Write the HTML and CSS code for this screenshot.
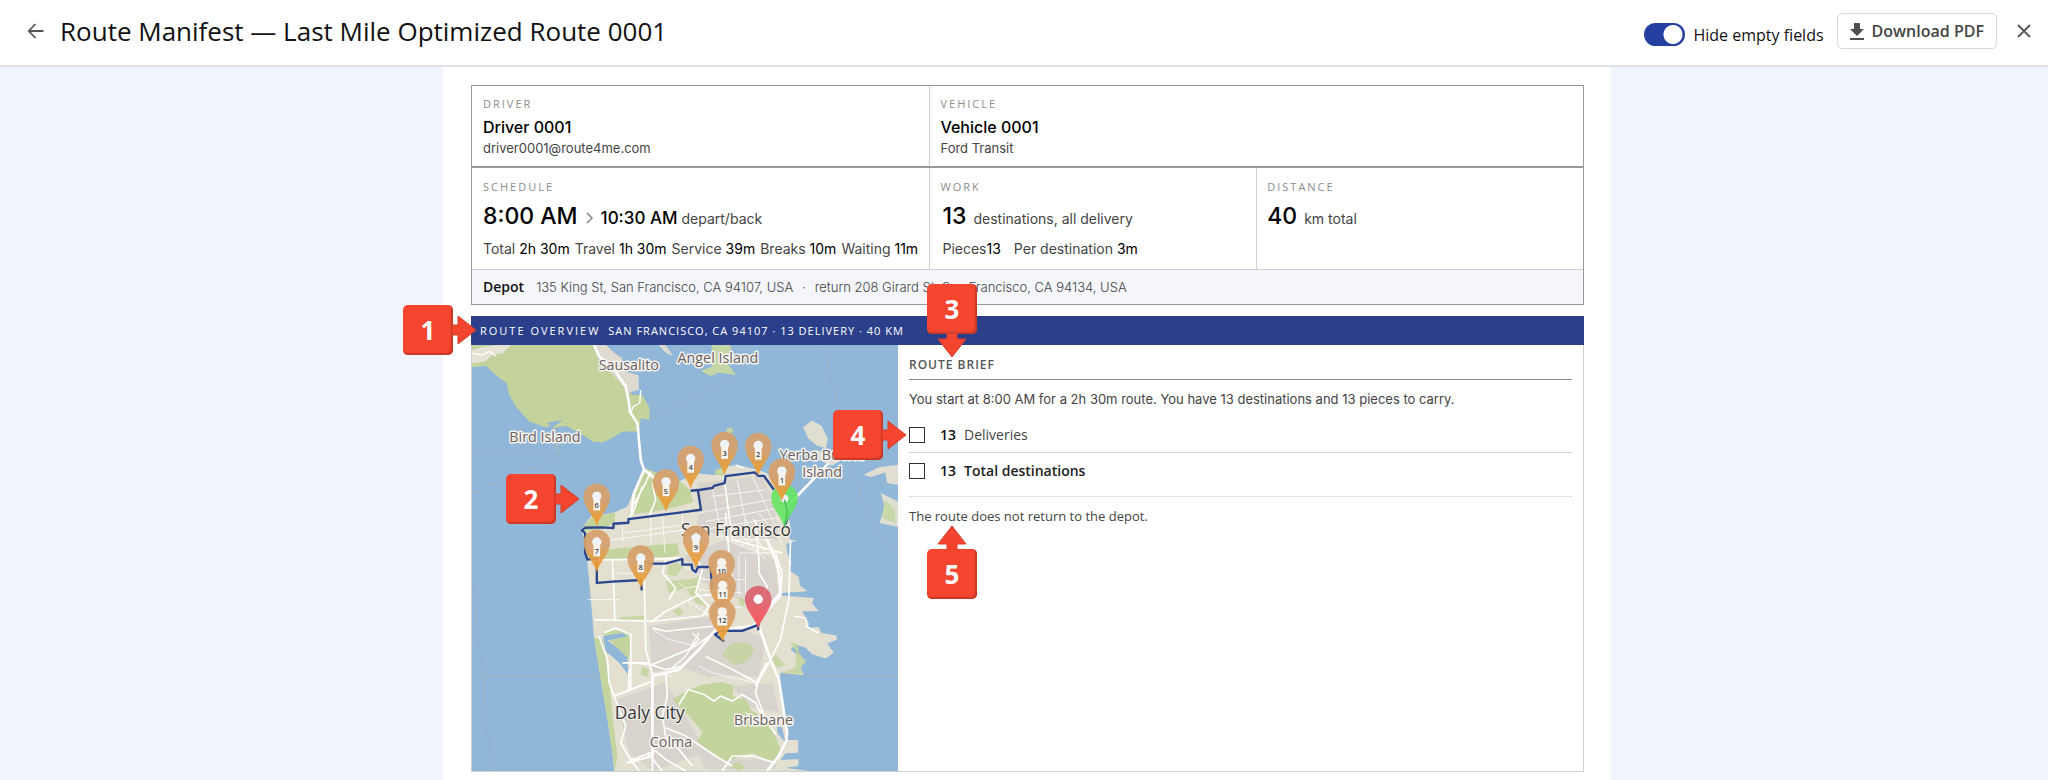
FILE: index.html
```html
<!DOCTYPE html>
<html lang="en">
<head>
<meta charset="utf-8">
<meta name="viewport" content="width=device-width, initial-scale=1">
<title>Route Manifest</title>
<link rel="stylesheet" href="styles.css">
</head>
<body>
<header class="topbar">
  <button class="icon-btn" type="button" aria-label="Back">
    <svg width="24" height="24" viewBox="0 0 24 24" fill="none" stroke="#555" stroke-width="1.8"><path d="M19.500 12H5M11.500 5L4.800 12L11.500 19"/></svg>
  </button>
  <h1 class="title">Route Manifest — Last Mile Optimized Route 0001</h1>
  <label class="toggle"><input class="switch" type="checkbox" role="switch" checked><span>Hide empty fields</span></label>
  <button class="download" type="button">
    <svg width="14" height="17" viewBox="0 0 14 17" fill="#4f4f4f"><path d="M4 0h6v6h4l-7 7-7-7h4zM0 15h14v2H0z"/></svg>
    Download PDF
  </button>
  <button class="icon-btn close" type="button" aria-label="Close">
    <svg width="14" height="14" viewBox="0 0 14 14" fill="none" stroke="#555" stroke-width="1.8"><path d="M1 1l12 12M13 1L1 13"/></svg>
  </button>
</header>
<main class="page">
  <article class="sheet">
    <section class="summary">
      <div class="row people">
        <div class="cell"><h2 class="label">DRIVER</h2><p class="name">Driver 0001</p><p class="sub">driver0001@route4me.com</p></div>
        <div class="cell"><h2 class="label">VEHICLE</h2><p class="name">Vehicle 0001</p><p class="sub">Ford Transit</p></div>
      </div>
      <div class="row stats">
        <div class="cell">
          <h2 class="label">SCHEDULE</h2>
          <p class="figure"><span class="big">8:00 AM</span><svg class="chev" width="8" height="14" viewBox="0 0 8 14" fill="none" stroke="#888" stroke-width="1.500"><path d="M1 2l5 5-5 5"/></svg><span class="mid">10:30 AM</span><span class="unit">depart/back</span></p>
          <p class="facts"><span>Total <b>2h 30m</b></span><span>Travel <b>1h 30m</b></span><span>Service <b>39m</b></span><span>Breaks <b>10m</b></span><span>Waiting <b>11m</b></span></p>
        </div>
        <div class="cell work">
          <h2 class="label">WORK</h2>
          <p class="figure wide"><span class="big">13</span><span class="unit">destinations, all delivery</span></p>
          <p class="facts wide"><span>Pieces<b>13</b></span><span>Per destination <b>3m</b></span></p>
        </div>
        <div class="cell">
          <h2 class="label">DISTANCE</h2>
          <p class="figure wide"><span class="big">40</span><span class="unit">km total</span></p>
        </div>
      </div>
      <div class="depot"><b>Depot</b><span>135 King St, San Francisco, CA 94107, USA</span><span>·</span><span>return 208 Girard St, San Francisco, CA 94134, USA</span></div>
    </section>

    <section class="overview">
      <div class="bar"><h2 class="bar-title">ROUTE OVERVIEW</h2><span class="bar-meta">SAN FRANCISCO, CA 94107 · 13 DELIVERY · 40 KM</span>
        <span class="callout right c1">1<svg class="tip" viewBox="0 0 24 30"><path d="M0 10H6V1L24 15L6 29V20H0z"/></svg></span>
      </div>
      <div class="body">
        <div class="map">
          <svg class="map-art" viewBox="18 15 1280 1280" role="img" aria-label="Route map of San Francisco">
            <defs>
              <linearGradient id="amber" x1="0" y1="0" x2="0" y2="1"><stop offset="0.400" stop-color="#d6a06c"/><stop offset="0.800" stop-color="#eb9d35"/></linearGradient>
              <linearGradient id="rose" x1="0" y1="0" x2="0" y2="1"><stop offset="0.300" stop-color="#db6470"/><stop offset="0.800" stop-color="#f4535b"/></linearGradient>
              <path id="drop" d="M0 0C-7 -30 -40 -57 -40 -89A40 40 0 0 1 40 -89C40 -57 7 -30 0 0Z"/>
              <g id="pin"><use href="#drop" fill="url(#amber)" opacity="0.930"/><circle cy="-91" r="14" fill="#edf3f8"/><path d="M-10 -86H10V-48H-10z" fill="#f7f5ef"/></g>
              <g id="pin2"><use href="#drop" fill="url(#amber)" opacity="0.930"/><circle cy="-91" r="14" fill="#f7f3ee"/><path d="M-15 -80H15V-50H-15z" fill="#f7f5ef"/></g>
            </defs>
            <path fill="#90b7d8" d="M0 0H1320V1320H0z"/>
            <g fill="none" stroke="#9eafbd" stroke-width="2">
              <path d="M545 242L812 108M1070 15L1120 200L1190 490L1250 590L1290 630M18 345H285L270 310M18 460L280 350M18 720L50 1008L75 1295M50 1008H1298"/>
            </g>
            <path fill="#e3e0d1" d="M345 570L375 530L445 518L485 500L505 450L535 385L570 400L640 425L690 400L750 406L770 380L820 376L870 388L905 400L940 450L962 500L975 560L972 600L995 603L962 612L965 640L978 670L970 690L1000 712L1003 738L1027 755L945 760L948 768L1045 775L1040 792L1060 815L1010 815L1030 850L1028 865L1060 862L1068 880L1112 888L1115 900L1085 912L1105 940L1080 957L1040 944L1020 925L990 915L975 930L1020 965L1005 985L1015 1007L945 1000L942 1040L952 1090L962 1160L967 1202L998 1202L998 1240L960 1242L945 1262L1000 1260L998 1280L960 1285L1030 1295H445L440 1240L425 1140L405 1020L385 895L375 780L365 670L357 600Z"/>
            <path fill="#d9d3cd" d="M700 430L890 408L925 490L940 600L800 590L690 570L700 520zM655 650L780 600L930 660L940 780L860 800L700 720zM550 860L740 830L900 900L880 1010L720 1010L640 980L560 1000zM450 1080L600 1030L650 1110L720 1240L560 1295L490 1240zM800 1040L920 1030L940 1120L850 1100zM660 1180L760 1260L860 1260L940 1220L930 1290H720z"/>
            <path fill="#c3d39b" d="M18 82L60 78L90 105L122 130L130 165L150 200L190 245L240 262L262 258L270 310L282 340L262 300L268 264L300 258L350 285L380 305L410 308L430 300L470 275L520 275L525 235L550 240L552 205L530 165L500 165L460 120L430 90L405 70L380 15H18z"/>
            <path fill="#90b7d8" d="M245 248L292 240L255 265z"/>
            <path fill="#dedad0" d="M380 15H420L450 42L470 55L462 80L480 95L518 105L520 150L490 158L455 120L405 65zM578 15L600 15L622 48L600 38z"/>
            <path fill="#e4e3d6" d="M18 30L50 20L105 15H135L110 40L80 45L55 65L18 70z"/>
            <path fill="#c5d6a6" d="M738 15H795L800 48L785 70L812 105L760 98L735 108L705 92L738 80zM780 270L795 262L805 275L790 285z"/>
            <path fill="#e0ddd1" d="M1013 262L1040 242L1068 258L1087 295L1082 325L1055 318L1028 295zM1050 330L1085 340L1120 365L1100 378L1060 360zM1195 405L1240 382L1298 375V435L1265 430L1260 398L1215 412zM1246 460L1298 485V562L1243 550L1258 500z"/>
            <path fill="#c9d8aa" d="M1258 480L1290 510V550L1250 535z"/>
            <g fill="#c4d49f">
              <path d="M540 385L600 410L650 430L672 450L684 487L620 505L555 517L488 525L505 470z"/>
              <path d="M347 567L380 530L448 518L448 545L425 560L360 575zM750 390L775 382L775 408L748 405z"/>
              <path d="M365 640L440 628L635 610L642 645L600 655L365 665z"/>
              <path d="M385 895L412 900L420 960L432 1040L440 1130L455 1250L447 1295L440 1240L425 1140L405 1020z"/>
              <path d="M410 882L430 870L488 878L495 915L490 960L470 955L440 910z"/>
              <path d="M620 1080L665 1052L710 1035L770 1028L805 1038L800 1070L840 1080L860 1115L900 1135L930 1190L945 1230L920 1270L860 1240L775 1268L735 1240L692 1205L712 1180L670 1130z"/>
              <path d="M770 945L800 910L850 910L866 930L845 965L805 978zM970 905L998 915L1000 940L1022 965L1005 985L1012 1005L945 1000L990 985L992 935zM605 680L635 668L652 682L630 710L605 705zM620 815L640 804L655 815L640 830zM600 725L680 718L700 710L690 760L720 800L690 790L660 745L610 760zM530 980L550 990L545 1015L525 1005zM905 950L930 945L960 975L935 985zM460 833L535 828V840L460 842zM790 1280L820 1265L840 1285L820 1295zM820 775L838 778L835 800L820 795z" opacity=".85"/>
            </g>
            <path fill="#90b7d8" d="M412 890L440 885L470 880L485 890L440 900L425 902L460 930L485 955L487 1005L460 970L420 935zM935 1160L950 1165L960 1210L935 1180z"/>
            <g fill="none" stroke="#fff" stroke-linejoin="round">
              <path stroke-width="3" opacity=".75" d="M470 548V608M555 525V610M590 520L598 640M650 512V600M700 520L965 470M720 545L965 500M710 570L960 530M740 440L770 600M815 420L850 600M860 410L930 560M735 470L900 450M800 560L900 660M820 620L930 570M780 600L880 640M840 540L900 640M860 535L930 640M880 520L950 610M800 600L920 600M820 640H940M470 580L660 555M370 610L660 570M370 660H640M365 780H460M455 700L540 705M640 670L720 720M700 720H840M700 750L830 760M800 650V760M820 650V770M840 650V760M640 730L660 745L700 740M560 870L610 900L690 920M660 780L735 830M700 830L830 800M700 980L740 1000L870 1030M560 1000L620 1010"/>
              <path stroke-width="5" d="M365 662L640 655M440 660L448 845M535 690L540 930L560 1005V1295M385 840L560 845L700 830M560 845L600 815L650 790L690 770L740 765M560 865L600 875L740 860M445 1070L560 1025M495 970L560 975L680 925L760 870M490 990L488 1050M470 970L540 970L600 990L650 980M400 890L410 920L425 960L430 1030L445 1070L480 1160L465 1210L495 1262M415 880L450 865L495 885V1050M600 1000L605 1070L590 1130L600 1190L640 1230L680 1280M640 1095L668 1050L715 1065L745 1085L765 1070L800 1085L830 1065L870 1090L880 1110L930 1185M600 660L590 700L630 745L610 780M690 650L710 690L690 760L730 800L710 830M870 540L880 660V700L905 740L890 790M930 640L950 700L945 770L890 830M870 1040L910 970L945 900L970 780L975 600M780 520L790 640M775 410L800 600L950 640M600 1165L660 1190L750 1250L800 1280M770 1295L800 1250L860 1250L930 1270M495 1262L570 1235L600 1260L660 1295M495 1262L520 1295M545 1240L590 1295M500 500L535 440L555 395M550 530L570 480L560 430M500 525L530 440M720 950L790 985L875 1030M880 1020L870 1060L900 1140"/>
              <path stroke-width="8" d="M385 15L400 50L440 80L480 140L490 190L492 215L515 250L525 360L535 390L570 418L630 432M535 390L505 460L495 530M960 505L1090 370M905 600L930 660L940 700L945 760L885 830M880 860L915 960L940 1020L965 1180L962 1205L940 1250L905 1295M560 1010L640 990L700 930L750 870L860 860L890 830M560 1260L560 1010M485 1270L560 1250M905 970L870 1040"/>
              <path stroke-width="4" d="M525 150L522 190L502 200L495 220M20 40L50 45L70 35L90 48M810 375L835 385M985 830L1020 835L1025 860L1055 880M1020 860L1060 880M840 1120L930 1160M680 880L700 900L670 930M700 880L660 950L620 985"/>
            </g>
            <g fill="none" stroke="#2a468c" stroke-width="7" stroke-linejoin="round">
              <path d="M957 560L972 520M925 450L895 408L878 408L868 398L780 409L777 430L745 438L742 444L705 450L675 453M697 453L706 510L630 520L600 524L512 535L488 538V549L443 552V565L410 563L358 564L348 572L358 580V640L365 660L393 657V730L440 726L525 721L528 752M548 672H600L650 658V675L678 675L680 690L690 697L697 682H735L740 750M771 780V860M775 905L748 885L765 874H830L878 856V872"/>
            </g>
            <g class="place">
              <text x="489" y="90">Sausalito</text><text x="757" y="68">Angel Island</text><text x="237" y="307">Bird Island</text><text x="1070" y="360">Yerba Buena</text><text x="1070" y="411">Island</text><text x="894" y="1156">Brisbane</text><text x="616" y="1222">Colma</text>
            </g>
            <g class="place city"><text x="811" y="588">San Francisco</text><text x="552" y="1138">Daly City</text></g>
            <use href="#drop" x="957" y="563" fill="#66e464" opacity=".92"/><circle cx="957" cy="476" r="12" fill="#eee"/>
            <path d="M957 480L965 515L957 560" fill="none" stroke="#43b957" stroke-width="4"/>
            <use href="#pin" x="949" y="485"/><use href="#pin" x="878" y="408"/><use href="#pin" x="777" y="405"/><use href="#pin" x="675" y="447"/><use href="#pin" x="601" y="517"/><use href="#pin" x="393" y="560"/><use href="#pin" x="393" y="698"/><use href="#pin" x="525" y="746"/><use href="#pin" x="691" y="686"/>
            <use href="#pin2" x="768" y="760"/>
            <text class="num" x="768" y="703">10</text>
            <use href="#pin2" x="771" y="828"/><use href="#pin2" x="770" y="908"/>
            <use href="#drop" x="878" y="868" fill="url(#rose)" opacity=".93"/><circle cx="878" cy="779" r="14" fill="#fff"/>
            <g class="num">
              <text x="949" y="430">1</text><text x="878" y="353">2</text><text x="777" y="350">3</text><text x="675" y="392">4</text><text x="601" y="462">5</text><text x="393" y="505">6</text><text x="393" y="643">7</text><text x="525" y="691">8</text><text x="691" y="631">9</text><text x="771" y="771">11</text><text x="770" y="851">12</text>
            </g>
          </svg>
          <span class="callout right c2">2<svg class="tip" viewBox="0 0 24 30"><path d="M0 10H6V1L24 15L6 29V20H0z"/></svg></span>
          <span class="callout right c4">4<svg class="tip" viewBox="0 0 24 30"><path d="M0 10H6V1L24 15L6 29V20H0z"/></svg></span>
        </div>
        <div class="brief">
          <h3 class="brief-title">ROUTE BRIEF</h3>
          <p class="intro">You start at 8:00 AM for a 2h 30m route. You have 13 destinations and 13 pieces to carry.</p>
          <label class="check"><input class="box" type="checkbox"><b>13</b><span>Deliveries</span></label>
          <label class="check total"><input class="box" type="checkbox"><b>13</b><span>Total destinations</span></label>
          <p class="note">The route does not return to the depot.</p>
          <span class="callout down c3">3<svg class="tip" viewBox="0 0 30 24"><path d="M10 0V6H1L15 24L29 6H20V0z"/></svg></span>
          <span class="callout up c5">5<svg class="tip" viewBox="0 0 30 24"><path d="M10 24V18H1L15 0L29 18H20V24z"/></svg></span>
        </div>
      </div>
    </section>
  </article>
</main>
</body>
</html>
```

FILE: styles.css
```css
* { box-sizing: border-box; }
body { margin: 0; background: #f0f4fd; font-family: "Open Sans", sans-serif; color: #111; min-height: 100vh; display: flex; flex-direction: column; }
h1, h2, h3, p { margin: 0; font-weight: 400; }
button { font: inherit; cursor: pointer; }

.topbar { display: flex; align-items: center; height: 67px; padding: 0 12px 3px 24px; background: #fff; border-bottom: 2px solid #e0e4e7; }
.icon-btn { display: flex; align-items: center; justify-content: center; width: 24px; height: 24px; padding: 0; border: 0; background: none; }
.title { flex: 1; margin-left: 12px; font-size: 26px; line-height: 36px; }
.toggle { display: flex; align-items: center; gap: 8px; margin: 7px 13px 0 0; font-size: 16px; line-height: 24px; }
.switch { appearance: none; width: 41px; height: 23px; margin: 0; border-radius: 12px; background: radial-gradient(circle at 29px 50%, #fff 9px, #233fa1 10px); }
.download { display: flex; align-items: center; gap: 8px; height: 36px; padding: 0 12px; border: 1px solid #d8d8d8; border-radius: 5px; background: #fff; color: #444; font-size: 16px; font-weight: 600; }
.close { margin-left: 15px; }

.page { flex: 1; display: flex; justify-content: center; padding-left: 6px; }
.sheet { width: 100%; max-width: 1168px; padding: 18px 27px 8px 28px; background: #fff; }

.summary { border: 1px solid #999; font-family: Inter, sans-serif; font-weight: 300; color: #444; }
.row { display: grid; }
.people { grid-template-columns: minmax(0, 14fr) minmax(0, 20fr); border-bottom: 2px solid #999; }
.stats { grid-template-columns: minmax(0, 14fr) minmax(0, 10fr) minmax(0, 10fr); border-bottom: 1px solid #d0d0d0; }
.cell { padding: 10px 11px; }
.cell + .cell { padding-left: 10px; border-left: 1px solid #d0d0d0; }
.stats .cell { padding-top: 11px; }
.label { font-family: "Open Sans", sans-serif; font-size: 11px; line-height: 16px; font-weight: 500; letter-spacing: 2px; color: #8c8c8c; }
.name { margin-top: 3px; font-size: 16px; line-height: 24px; font-weight: 500; color: #000; }
.sub { font-size: 13px; line-height: 18px; }
.people .cell { padding-bottom: 9px; }
.figure { display: flex; align-items: baseline; margin-top: 6px; line-height: 30px; }
.big { font-size: 23px; font-weight: 500; color: #000; }
.mid { font-size: 17px; font-weight: 500; color: #000; }
.chev { align-self: center; margin: 0 7px 0 8px; }
.unit { margin-left: 4px; font-size: 14px; }
.wide .unit { margin-left: 7px; }
.facts { display: flex; gap: 5px; margin-top: 5px; font-size: 14px; line-height: 20px; white-space: nowrap; }
.facts.wide { gap: 13px; }
.facts b { font-weight: 400; color: #000; }
.work .wide { padding-left: 2px; }
.depot { display: flex; gap: 9px; padding: 7px 11px; background: #f4f6fb; font-size: 13px; line-height: 20px; }
.depot b { margin-right: 3px; font-family: "Open Sans", sans-serif; font-size: 14px; font-weight: 600; color: #111; }

.overview { margin-top: 11px; }
.bar { position: relative; display: flex; align-items: center; gap: 8px; height: 29px; padding: 0 9px; background: #2b3f8b; color: #fff; white-space: nowrap; }
.bar-title { font-size: 11px; font-weight: 500; letter-spacing: 2px; }
.bar-meta { font-size: 11px; font-weight: 500; letter-spacing: 1px; }
.body { display: grid; grid-template-columns: minmax(0, 426px) 1fr; border: 1px solid #d0d0d0; border-top: 0; }
.map { position: relative; }
.map-art { display: block; width: 100%; height: auto; }
.place { font-size: 43px; fill: #6b6060; stroke: #f5f4f0; stroke-width: 9px; stroke-linejoin: round; paint-order: stroke; text-anchor: middle; }
.city { font-size: 52px; fill: #333; stroke-width: 6px; }
.num { font-size: 23px; font-weight: 600; fill: #444; text-anchor: middle; }

.brief { position: relative; padding: 11px; }
.brief-title { padding-bottom: 5px; border-bottom: 1px solid #888; font-size: 12px; line-height: 18px; font-weight: 600; letter-spacing: 1px; color: #555; }
.intro { margin: 9px 0 8px; font-family: Inter, sans-serif; font-size: 13px; line-height: 20px; color: #444; }
.check { display: flex; align-items: center; height: 36px; border-bottom: 1px solid #d5d5d5; font-size: 14px; color: #444; }
.check b { margin: 0 8px 0 15px; font-weight: 600; color: #111; }
.box { appearance: none; width: 16px; height: 16px; margin: 0; border: 1px solid #333; background: #fff; }
.total { height: 44px; padding-bottom: 8px; border-bottom: 1px dotted #ccc; font-weight: 600; color: #222; }
.note { margin-top: 9px; font-size: 13px; line-height: 20px; color: #444; }

.callout { position: absolute; z-index: 2; width: 50px; height: 50px; border-radius: 5px; background: #f5452f; box-shadow: inset -2px -2px 1px #c93a28; color: #fff; font: 700 26px/50px "Open Sans", sans-serif; letter-spacing: 0; text-align: center; }
.tip { position: absolute; fill: #f5452f; stroke: #d33d29; stroke-width: 1px; }
.right .tip { left: 49px; top: 10px; width: 24px; height: 30px; }
.down .tip { left: 10px; top: 49px; width: 30px; height: 24px; }
.up .tip { left: 10px; top: -23px; width: 30px; height: 24px; }
.c1 { left: -68px; top: -11px; }
.c2 { left: 34px; top: 129px; }
.c4 { left: 361px; top: 65px; }
.c3 { left: 29px; top: -61px; }
.c5 { left: 29px; top: 204px; }
```
